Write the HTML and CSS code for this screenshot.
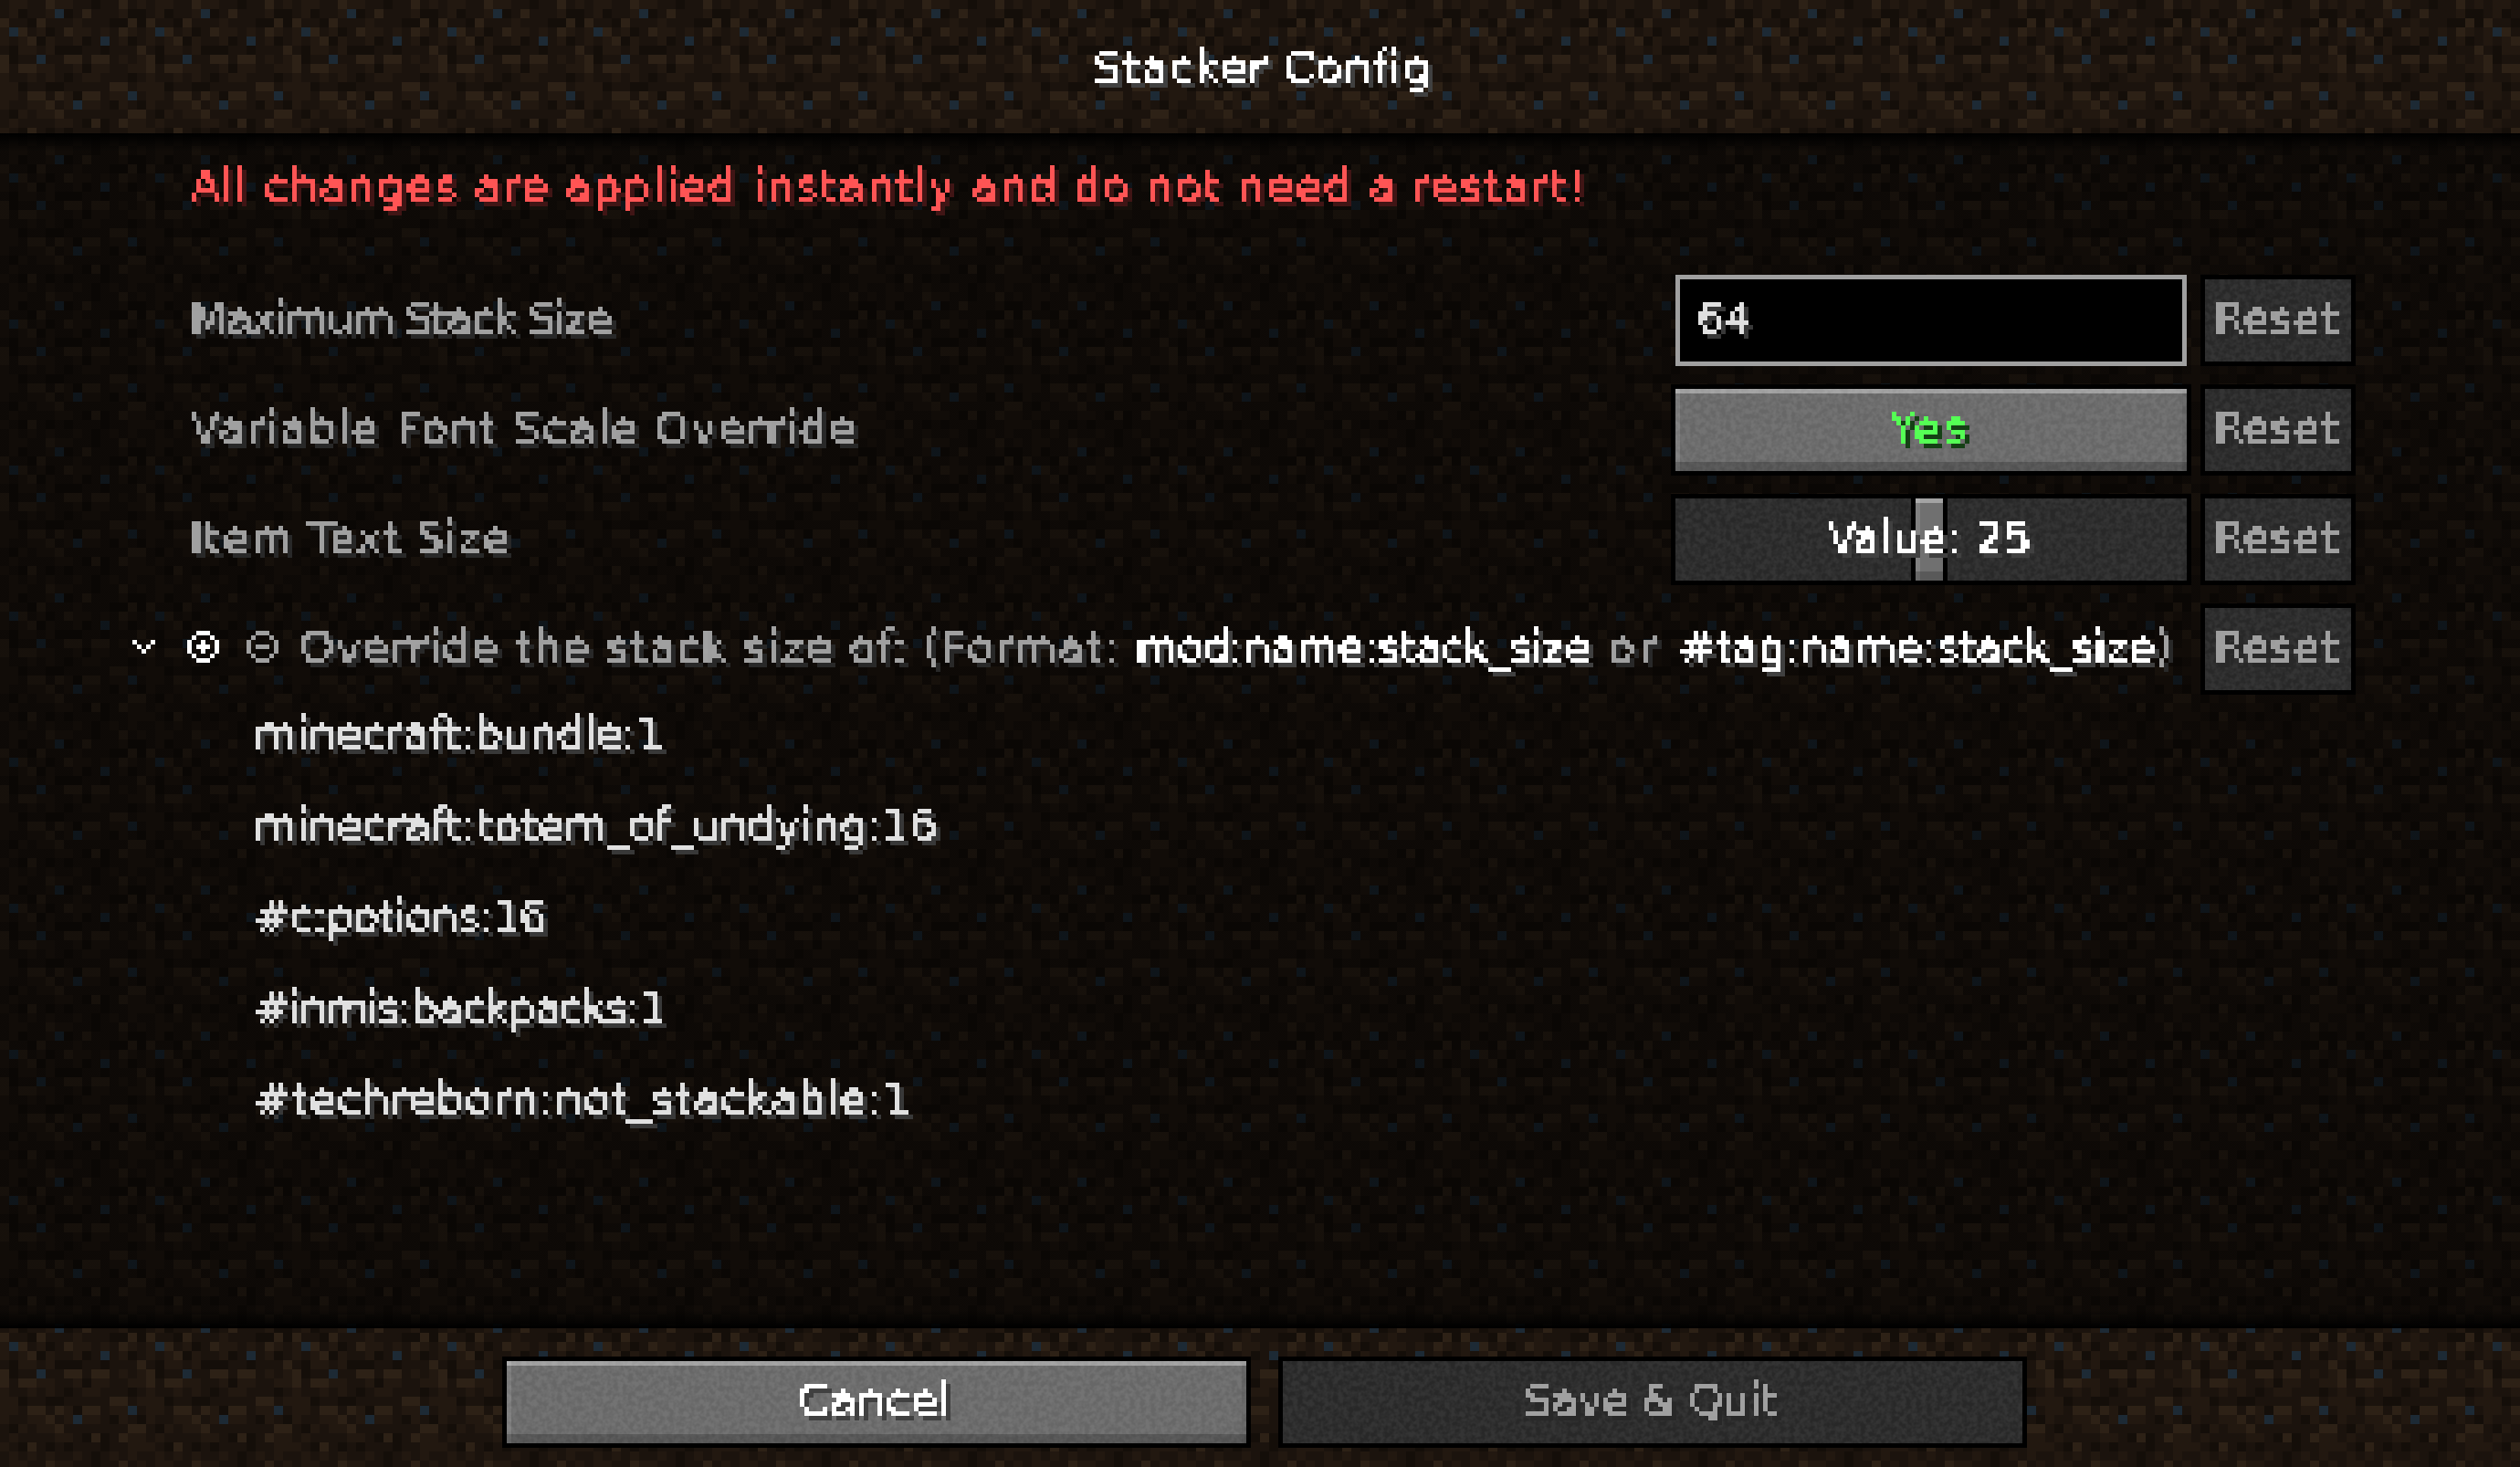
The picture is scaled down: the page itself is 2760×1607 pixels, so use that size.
FILE: index.html
```html
<!DOCTYPE html>
<html lang="en">
<head>
<meta charset="utf-8">
<title>Stacker Config</title>
<link rel="stylesheet" href="styles.css">
</head>
<body>
<svg class="filter-defs" aria-hidden="true">
  <filter id="pixelate" x="-3%" y="-10%" width="106%" height="125%" color-interpolation-filters="sRGB">
    <feOffset in="SourceGraphic" dx="0" dy="-1" result="up"/>
    <feMerge result="thick">
      <feMergeNode in="up"/>
      <feMergeNode in="SourceGraphic"/>
    </feMerge>
    <feFlood x="4" y="2" width="1" height="1"/>
    <feComposite width="5" height="5"/>
    <feTile result="grid"/>
    <feComposite in="thick" in2="grid" operator="in"/>
    <feMorphology operator="dilate" radius="2"/>
    <feOffset dx="-2" dy="0"/>
    <feComponentTransfer result="px">
      <feFuncA type="discrete" tableValues="0 1 1 1"/>
    </feComponentTransfer>
    <feColorMatrix in="px" type="matrix" values="0.25 0 0 0 0  0 0.25 0 0 0  0 0 0.25 0 0  0 0 0 1 0"/>
    <feOffset dx="5" dy="5" result="shadow"/>
    <feMerge>
      <feMergeNode in="shadow"/>
      <feMergeNode in="px"/>
    </feMerge>
  </filter>
</svg>

<div class="screen">
  <header class="top-bar">
    <h1 class="mc white ls-title">Stacker Config</h1>
  </header>

  <main class="list">
    <p class="mc red note ls-note">All changes are applied instantly and do not need a restart!</p>

    <div class="row">
      <span class="mc grey label ls-max">Maximum Stack Size</span>
      <div class="control input"><span class="mc pale ls-64">64</span></div>
      <button class="mc-btn off reset"><span class="mc grey ls-reset">Reset</span></button>
    </div>

    <div class="row">
      <span class="mc grey label ls-var">Variable Font Scale Override</span>
      <button class="mc-btn on control"><span class="mc green ls-yes">Yes</span></button>
      <button class="mc-btn off reset"><span class="mc grey ls-reset">Reset</span></button>
    </div>

    <div class="row">
      <span class="mc grey label ls-item">Item Text Size</span>
      <div class="mc-btn off control slider">
        <i class="handle"></i>
        <span class="mc white slider-text ls-value">Value: 25</span>
      </div>
      <button class="mc-btn off reset"><span class="mc grey ls-reset">Reset</span></button>
    </div>

    <div class="row row-tree">
      <svg class="chevron" viewBox="0 0 5 3"><path d="M0 0h1v1H0zM4 0h1v1H4zM1 1h1v1H1zM3 1h1v1H3zM2 2h1v1H2z"/></svg>
      <svg class="round plus" viewBox="0 0 7 7"><path d="M2 0h3v1H2zM1 1h1v1H1zM5 1h1v1H5zM0 2h1v3H0zM6 2h1v3H6zM1 5h1v1H1zM5 5h1v1H5zM2 6h3v1H2zM3 2h1v3H3zM2 3h3v1H2z"/></svg>
      <svg class="round minus" viewBox="0 0 7 7"><path d="M2 0h3v1H2zM1 1h1v1H1zM5 1h1v1H5zM0 2h1v3H0zM6 2h1v3H6zM1 5h1v1H1zM5 5h1v1H5zM2 6h3v1H2zM2 3h3v1H2z"/></svg>
      <p class="mc grey label tree-text"><span class="ls-fmt">Override the stack size of: (Format: </span><span class="white ls-mod">mod:name:stack_size</span><span class="ls-or"> or </span><span class="white ls-tag">#tag:name:stack_size</span><span>)</span></p>
      <button class="mc-btn off reset"><span class="mc grey ls-reset">Reset</span></button>
    </div>

    <ul class="entries">
      <li class="entry"><span class="mc pale ls-e1">minecraft:bundle:1</span></li>
      <li class="entry"><span class="mc pale ls-e2">minecraft:totem_of_undying:16</span></li>
      <li class="entry"><span class="mc pale ls-e3">#c:potions:16</span></li>
      <li class="entry"><span class="mc pale ls-e4">#inmis:backpacks:1</span></li>
      <li class="entry"><span class="mc pale ls-e5">#techreborn:not_stackable:1</span></li>
    </ul>
  </main>

  <footer class="bottom-bar">
    <button class="mc-btn on wide"><span class="mc white ls-cancel">Cancel</span></button>
    <button class="mc-btn off wide"><span class="mc grey ls-save">Save &amp; Quit</span></button>
  </footer>
</div>
</body>
</html>
```
FILE: styles.css
```css
* { box-sizing: border-box; }
html, body { margin: 0; padding: 0; }
body {
  width: 2760px;
  height: 1607px;
  overflow: hidden;
  background-color: #1b130d;
  background-image: url("data:image/svg+xml,%3Csvg xmlns='http://www.w3.org/2000/svg' width='160' height='160' viewBox='0 0 16 16' shape-rendering='crispEdges'%3E%3Crect width='16' height='16' fill='%231b130d'/%3E%3Cpath fill='%23140e09' d='M10 0h1v1h-1zM2 1h1v1h-1zM7 1h1v1h-1zM14 1h2v1h-2zM3 2h1v1h-1zM12 2h2v1h-2zM15 2h1v1h-1zM5 3h1v1h-1zM4 4h1v1h-1zM9 4h1v1h-1zM14 4h1v1h-1zM1 5h1v1h-1zM6 5h3v1h-3zM11 5h1v1h-1zM1 6h1v1h-1zM9 7h1v1h-1zM7 8h1v1h-1zM14 8h1v1h-1zM2 9h1v1h-1zM5 9h2v1h-2zM8 10h1v1h-1zM12 11h1v1h-1zM15 11h1v1h-1zM1 12h1v1h-1zM9 13h1v1h-1zM11 13h1v1h-1zM2 14h1v1h-1zM5 14h1v1h-1zM7 14h1v1h-1zM11 14h1v1h-1zM10 15h1v1h-1z'/%3E%3Cpath fill='%23221810' d='M1 0h2v1h-2zM6 0h2v1h-2zM15 0h1v1h-1zM1 1h1v1h-1zM5 1h1v1h-1zM13 1h1v1h-1zM8 2h1v1h-1zM0 3h1v1h-1zM4 3h1v1h-1zM8 3h2v1h-2zM11 3h1v1h-1zM14 3h1v1h-1zM0 4h1v1h-1zM2 4h1v1h-1zM5 4h1v1h-1zM8 4h1v1h-1zM13 4h1v1h-1zM2 5h2v1h-2zM5 5h1v1h-1zM13 6h1v1h-1zM15 6h1v1h-1zM4 7h2v1h-2zM8 7h1v1h-1zM10 7h2v1h-2zM14 7h2v1h-2zM0 8h1v1h-1zM3 8h1v1h-1zM5 8h1v1h-1zM9 8h2v1h-2zM0 9h2v1h-2zM15 9h1v1h-1zM0 10h2v1h-2zM7 10h1v1h-1zM12 10h2v1h-2zM0 11h1v1h-1zM3 11h2v1h-2zM7 11h1v1h-1zM9 11h2v1h-2zM13 11h1v1h-1zM2 12h1v1h-1zM4 12h2v1h-2zM1 13h1v1h-1zM6 13h2v1h-2zM14 13h2v1h-2zM0 14h1v1h-1zM14 14h2v1h-2zM1 15h1v1h-1zM3 15h1v1h-1zM5 15h1v1h-1zM8 15h1v1h-1zM12 15h1v1h-1zM14 15h1v1h-1z'/%3E%3Cpath fill='%232d2116' d='M5 0h1v1h-1zM13 0h1v1h-1zM9 1h1v1h-1zM0 2h1v1h-1zM4 2h1v1h-1zM14 2h1v1h-1zM2 3h1v1h-1zM7 3h1v1h-1zM13 3h1v1h-1zM3 4h1v1h-1zM15 5h1v1h-1zM0 6h1v1h-1zM7 6h2v1h-2zM10 6h2v1h-2zM0 7h1v1h-1zM2 7h2v1h-2zM12 9h2v1h-2zM3 10h2v1h-2zM6 10h1v1h-1zM9 10h2v1h-2zM5 11h1v1h-1zM6 12h1v1h-1zM14 12h2v1h-2zM10 13h1v1h-1zM13 13h1v1h-1zM3 14h1v1h-1z'/%3E%3Cpath fill='%231d2a35' d='M6 1h1v1h-1zM1 3h1v1h-1zM11 4h1v1h-1zM4 6h1v1h-1zM14 10h1v1h-1zM8 11h1v1h-1z'/%3E%3C/svg%3E");
  background-size: 160px 160px;
  font-family: "DejaVu Sans", sans-serif;
}

.filter-defs { position: absolute; width: 0; height: 0; }

.screen { display: flex; flex-direction: column; height: 1607px; }

/* text */
.mc {
  display: block;
  margin: 0;
  padding-bottom: 4px;
  font-family: "DejaVu Sans", sans-serif;
  font-size: 48px;
  font-weight: 400;
  line-height: 66px;
  white-space: pre;
  filter: url(#pixelate);
}
.white { color: #fff; }
.pale  { color: #e0e0e0; }
.grey  { color: #a0a0a0; }
.red   { color: #ff5555; }
.green { color: #55ff55; }

.ls-title { letter-spacing: 1.55px; }
.ls-note { letter-spacing: 1.62px; }
.ls-max { letter-spacing: -2.1px; }
.ls-var { letter-spacing: 1.75px; }
.ls-item { letter-spacing: 1.1px; }
.ls-reset { letter-spacing: 0.5px; }
.ls-64 { letter-spacing: 0.5px; }
.ls-yes { letter-spacing: 3px; }
.ls-value { letter-spacing: 0; }
.ls-fmt { letter-spacing: 1.41px; }
.ls-mod { letter-spacing: -1.15px; }
.ls-or { letter-spacing: 4.5px; }
.ls-tag { letter-spacing: -0.55px; }
.ls-e1 { letter-spacing: -0.5px; }
.ls-e2 { letter-spacing: -0.25px; }
.ls-e3 { letter-spacing: -1.3px; }
.ls-e4 { letter-spacing: -1.9px; }
.ls-e5 { letter-spacing: 0.85px; }
.ls-cancel { letter-spacing: 0.8px; }
.ls-save { letter-spacing: -0.8px; }

/* bars */
.top-bar {
  flex: 0 0 146px;
  display: flex;
  justify-content: center;
  align-items: center;
  padding: 6px 0 0 10px;
}

.list {
  flex: 1 1 auto;
  padding-top: 25px;
  background:
    linear-gradient(#000, rgba(0, 0, 0, 0)) top / 100% 20px no-repeat,
    linear-gradient(rgba(0, 0, 0, 0), #000) bottom / 100% 20px no-repeat,
    linear-gradient(rgba(0, 0, 0, 0.5), rgba(0, 0, 0, 0.5));
}

.bottom-bar {
  flex: 0 0 152px;
  display: flex;
  justify-content: center;
  gap: 30px;
  padding: 31px 0 0 10px;
}

.note { margin: 0 0 60px 210px; }

/* rows */
.row {
  display: flex;
  align-items: center;
  height: 100px;
  margin-bottom: 20px;
  padding: 0 180px 0 210px;
}
.row-tree { margin-bottom: 0; padding-left: 145px; }
.label { flex: 1 1 auto; }

.control { flex: 0 0 570px; height: 100px; margin-right: 10px; }

.input {
  display: flex;
  align-items: center;
  margin-right: 15px;
  margin-left: 5px;
  flex-basis: 560px;
  padding-left: 20px;
  background: #000;
  border: 5px solid #a0a0a0;
}

/* buttons */
.mc-btn {
  display: flex;
  align-items: center;
  justify-content: center;
  height: 100px;
  padding: 0;
  border: 5px solid #000;
  background-image: url("data:image/svg+xml,%3Csvg xmlns='http://www.w3.org/2000/svg' width='900' height='100'%3E%3Cfilter id='n' x='0' y='0' width='100%25' height='100%25' color-interpolation-filters='sRGB'%3E%3CfeTurbulence type='fractalNoise' baseFrequency='.18' numOctaves='2' seed='4'/%3E%3CfeColorMatrix values='3 0 0 0 -1 3 0 0 0 -1 3 0 0 0 -1 0 0 0 0 .045'/%3E%3C/filter%3E%3Crect width='900' height='100' filter='url(%23n)'/%3E%3C/svg%3E");
  font: inherit;
}
.on {
  background-color: #6c6c6c;
  box-shadow:
    inset 0 -10px rgba(0, 0, 0, 0.2),
    inset 0 5px rgba(255, 255, 255, 0.36),
    inset 5px 0 rgba(255, 255, 255, 0.12),
    inset -5px 0 rgba(0, 0, 0, 0.06);
}
.off { background-color: #2a2a2a; }
.reset { flex: 0 0 170px; }
.wide { flex: 0 0 820px; }

/* slider */
.slider { position: relative; }
.handle {
  position: absolute;
  top: 0;
  bottom: 0;
  left: 258px;
  width: 40px;
  border-left: 5px solid #000;
  border-right: 5px solid #000;
  background-color: #707070;
  box-shadow:
    inset 0 -10px rgba(0, 0, 0, 0.2),
    inset 0 5px rgba(255, 255, 255, 0.36),
    inset 5px 0 rgba(255, 255, 255, 0.12);
}
.slider-text { position: relative; }

/* tree */
.chevron { flex: 0 0 25px; height: 15px; margin: 0 35px 5px 0; fill: #fff; shape-rendering: crispEdges; }
.round { flex: 0 0 35px; height: 35px; margin-bottom: 5px; shape-rendering: crispEdges; }
.plus { fill: #fff; margin-right: 30px; }
.minus { fill: #a0a0a0; margin-right: 25px; }
.tree-text { flex: 1 1 auto; }

.entries { margin: 0; padding: 0 0 0 280px; list-style: none; }
.entry { height: 100px; padding-top: 10px; }
```
